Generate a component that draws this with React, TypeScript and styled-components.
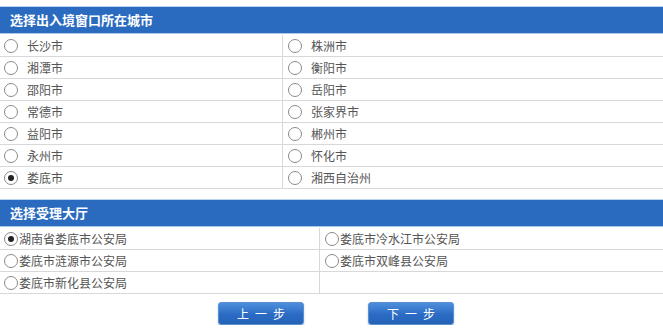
import React from "react";
import styled, { createGlobalStyle } from "styled-components";

const Global = createGlobalStyle`
  html, body { margin: 0; padding: 0; background: #fff; }
  body { font-family: "Noto Sans CJK SC", "Liberation Sans", sans-serif; }
`;

const Page = styled.div`
  padding-top: 6px;
  width: 663px;
`;

const Section = styled.div<{ $gap?: number }>`
  margin-bottom: ${(p) => p.$gap ?? 0}px;
`;

const Header = styled.div`
  height: 26px;
  background: #2a6bc0;
  border-top: 1px solid #b9d3f0;
  border-bottom: 1px solid #a9c8ec;
  margin-bottom: 1px;
  color: #fff;
  font-weight: bold;
  font-size: 13px;
  line-height: 26px;
  padding-left: 10px;
`;

const Grid = styled.div<{ $col: number }>`
  display: grid;
  grid-template-columns: ${(p) => p.$col}px 1fr;
`;

const Cell = styled.label<{ $left: boolean; $pad: number; $gap: number }>`
  display: flex;
  align-items: center;
  gap: ${(p) => p.$gap}px;
  height: 21px;
  border-bottom: 1px solid #d8d8d8;
  border-right: ${(p) => (p.$left ? "1px solid #d8d8d8" : "none")};
  padding-left: ${(p) => p.$pad}px;
  font-size: 12px;
  color: #555;
  box-sizing: content-box;
`;

const Radio = styled.span<{ $on: boolean }>`
  width: 12px;
  height: 12px;
  border-radius: 50%;
  border: 1px solid #8a8a8a;
  background: #fff;
  display: flex;
  align-items: center;
  justify-content: center;
  flex: none;
  &::after {
    content: "";
    width: 6px;
    height: 6px;
    border-radius: 50%;
    background: ${(p) => (p.$on ? "#222" : "transparent")};
  }
`;

const Buttons = styled.div`
  display: flex;
  gap: 64px;
  padding-left: 218px;
`;

const Btn = styled.button`
  width: 86px;
  height: 23px;
  border: 1px solid #5a8fd0;
  border-radius: 3px;
  background: linear-gradient(#4d8fdc, #2b6bc4 55%, #2463b8);
  color: #fff;
  font-family: "Noto Sans CJK SC", sans-serif;
  font-size: 12px;
  letter-spacing: 6px;
  padding: 0 0 0 6px;
  box-shadow: 0 1px 2px rgba(0, 0, 0, 0.25);
`;

const cities: [string, string][] = [
  ["长沙市", "株洲市"],
  ["湘潭市", "衡阳市"],
  ["邵阳市", "岳阳市"],
  ["常德市", "张家界市"],
  ["益阳市", "郴州市"],
  ["永州市", "怀化市"],
  ["娄底市", "湘西自治州"],
];

const halls: [string, string][] = [
  ["湖南省娄底市公安局", "娄底市冷水江市公安局"],
  ["娄底市涟源市公安局", "娄底市双峰县公安局"],
  ["娄底市新化县公安局", ""],
];

export default function App() {
  return (
    <Page>
      <Global />
      <Section $gap={10}>
        <Header>选择出入境窗口所在城市</Header>
        <Grid $col={283}>
          {cities.flatMap(([a, b]) => [
            <Cell key={a} $left $pad={4} $gap={9}>
              <Radio $on={a === "娄底市"} />
              {a}
            </Cell>,
            <Cell key={b} $left={false} $pad={5} $gap={9}>
              <Radio $on={false} />
              {b}
            </Cell>,
          ])}
        </Grid>
      </Section>
      <Section $gap={8}>
        <Header>选择受理大厅</Header>
        <Grid $col={320}>
          {halls.flatMap(([a, b], i) => [
            <Cell key={"a" + i} $left $pad={4} $gap={1}>
              <Radio $on={i === 0} />
              {a}
            </Cell>,
            <Cell key={"b" + i} $left={false} $pad={5} $gap={1}>
              {b && <Radio $on={false} />}
              {b}
            </Cell>,
          ])}
        </Grid>
      </Section>
      <Buttons>
        <Btn>上一步</Btn>
        <Btn>下一步</Btn>
      </Buttons>
    </Page>
  );
}
